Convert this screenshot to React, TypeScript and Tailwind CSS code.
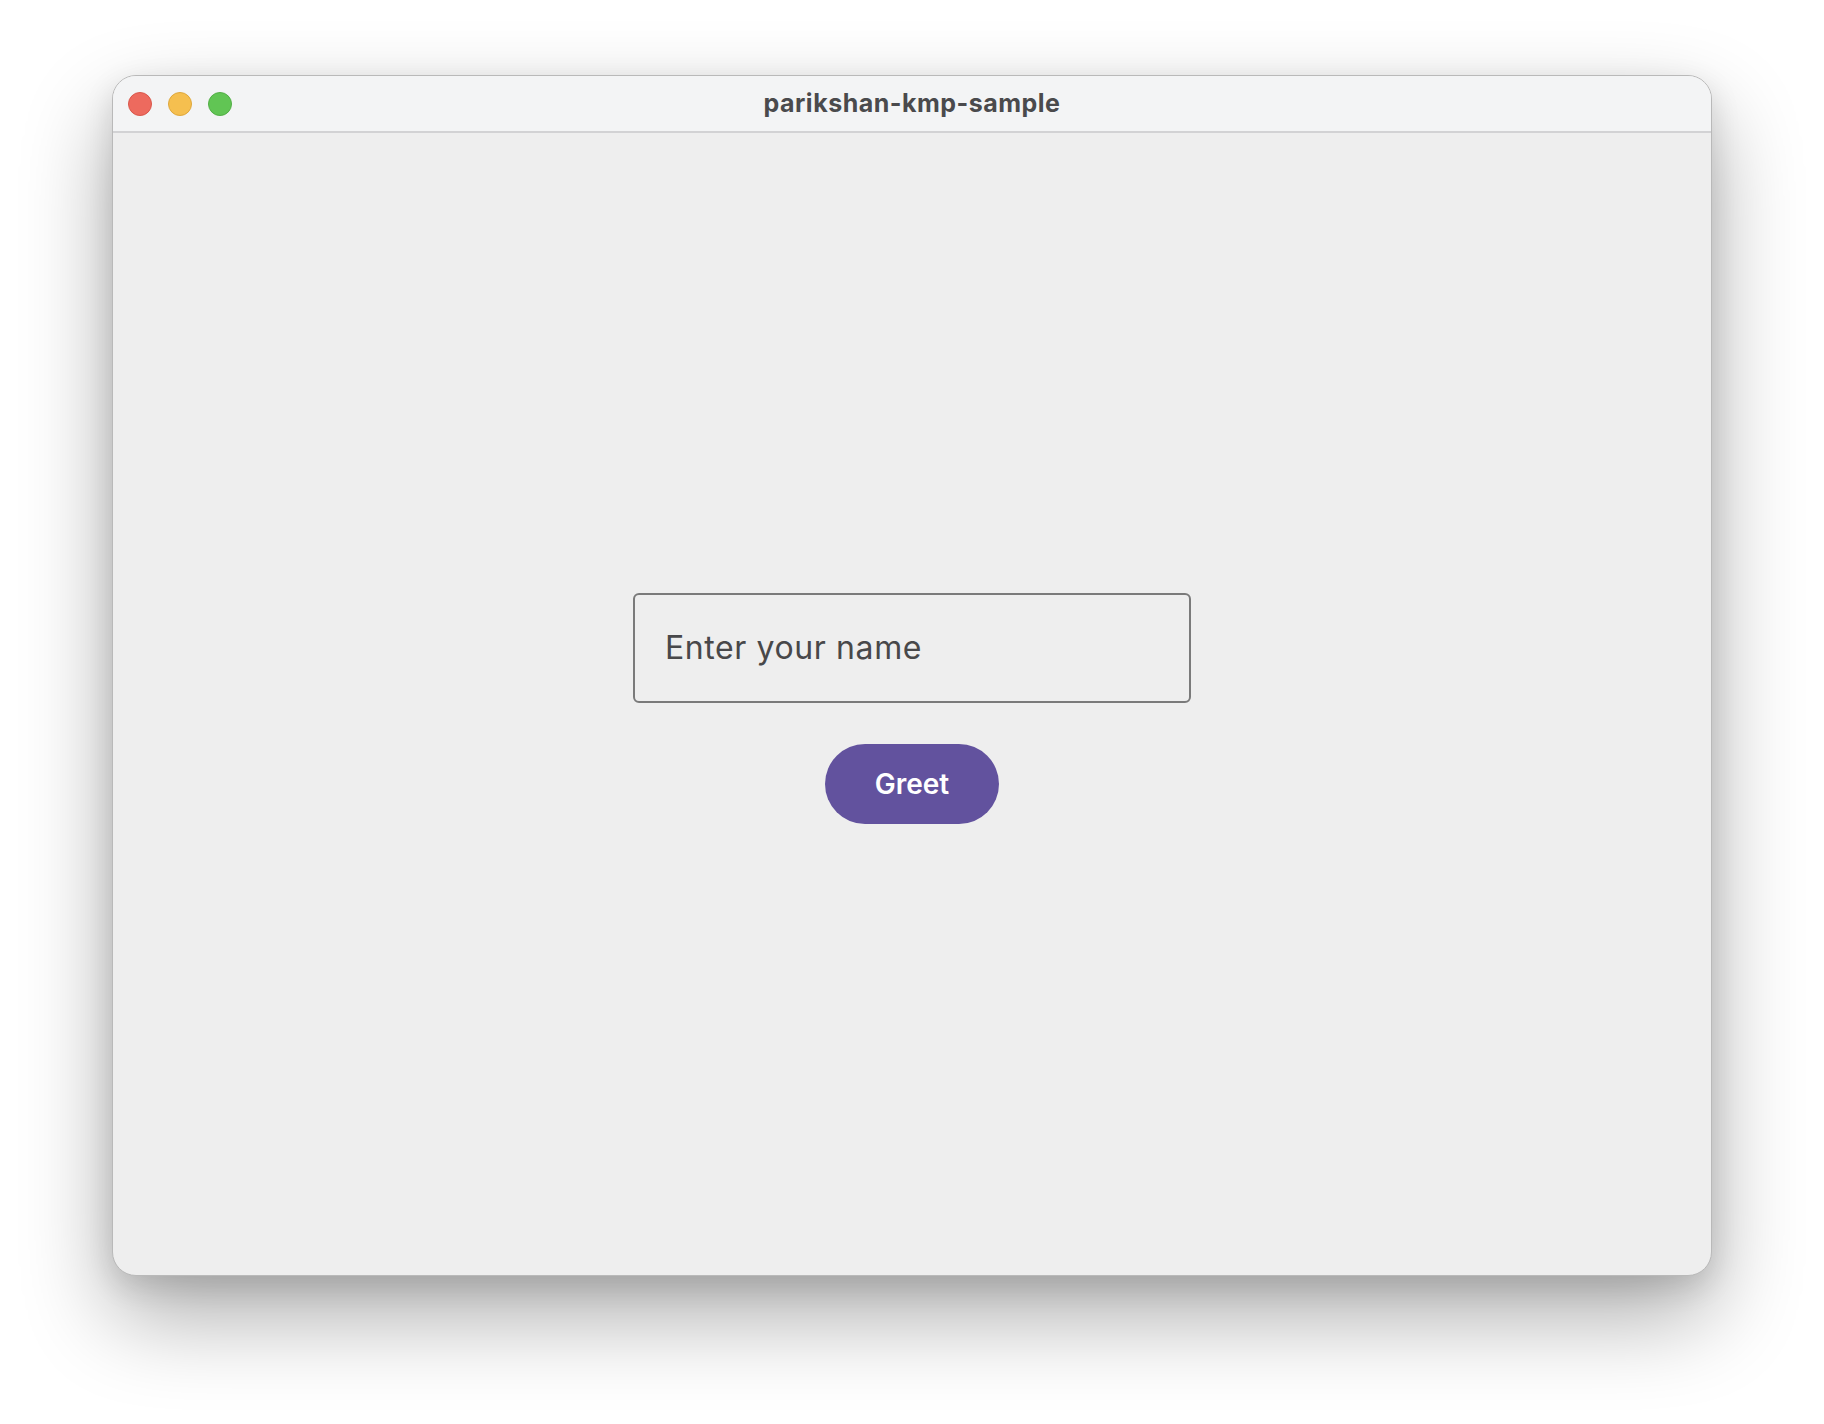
const TrafficLight = ({ color, ring }: { color: string; ring: string }) => (
  <div className={`h-[24px] w-[24px] rounded-full border ${color} ${ring}`} />
);

export default function App() {
  return (
    <div className="min-h-[1424px] w-full bg-white pl-[112px] pt-[75px] font-['Inter','Noto_Sans',sans-serif]">
      <div className="flex h-[1201px] w-[1600px] flex-col overflow-hidden rounded-[24px] border border-[#b9b9b9] bg-[#eeeeee] shadow-[0_40px_90px_rgba(0,0,0,0.33),0_10px_30px_rgba(0,0,0,0.12)]">
        {/* Title bar */}
        <div className="relative flex h-[57px] shrink-0 items-center border-b-2 border-[#d2d2d4] bg-[#f3f4f5] px-[15px]">
          <div className="flex gap-[16px]">
            <TrafficLight color="bg-[#ed6a5e]" ring="border-[#d9574b]" />
            <TrafficLight color="bg-[#f5bf4f]" ring="border-[#dea73c]" />
            <TrafficLight color="bg-[#61c554]" ring="border-[#52ae46]" />
          </div>
          <div className="absolute inset-0 flex items-center justify-center pointer-events-none">
            <span className="text-[25px] font-bold tracking-[0.5px] text-[#4a4a4c]">parikshan-kmp-sample</span>
          </div>
        </div>

        {/* Content */}
        <div className="flex flex-1 flex-col items-center justify-center gap-[41px] pt-[8px]">
          <div className="flex h-[110px] w-[558px] items-center rounded-[6px] border-2 border-[#7a7a7a] px-[30px]">
            <input
              placeholder="Enter your name"
              className="w-full bg-transparent text-[32px] tracking-[0.6px] text-[#48484a] outline-none placeholder:text-[#48484a]"
            />
          </div>
          <button className="h-[80px] w-[174px] rounded-full bg-[#62529e] text-[28px] font-semibold text-white">
            Greet
          </button>
        </div>
      </div>
    </div>
  );
}
